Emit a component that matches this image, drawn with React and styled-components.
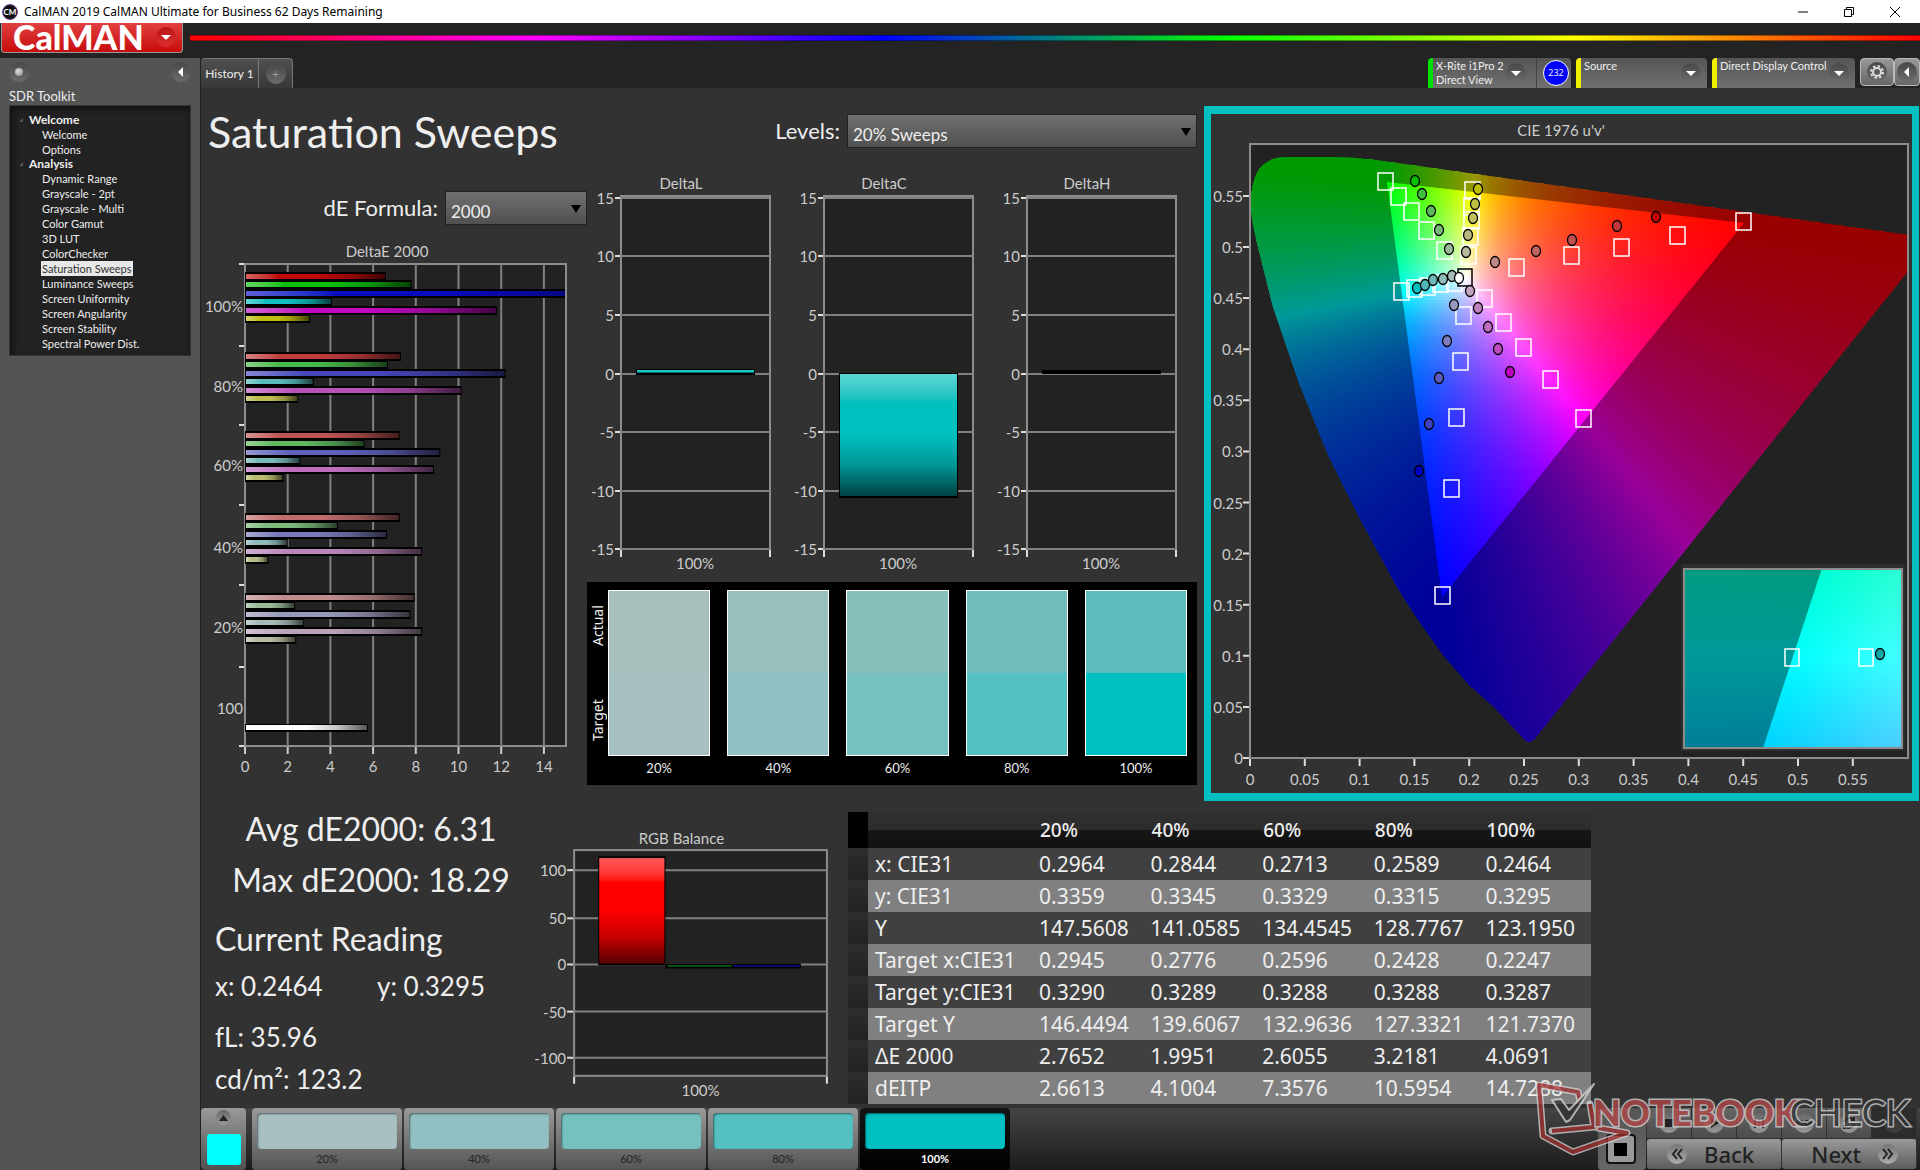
import React from "react";
import styled, { createGlobalStyle, css } from "styled-components";

/* ---------- data ---------- */

const tree = [
  { name: "Welcome", items: ["Welcome", "Options"] },
  {
    name: "Analysis",
    items: [
      "Dynamic Range",
      "Grayscale - 2pt",
      "Grayscale - Multi",
      "Color Gamut",
      "3D LUT",
      "ColorChecker",
      "Saturation Sweeps",
      "Luminance Sweeps",
      "Screen Uniformity",
      "Screen Angularity",
      "Screen Stability",
      "Spectral Power Dist.",
    ],
  },
];

const swatches = [
  { label: "20%", actual: "#a8c0bc", target: "#a7c0c2" },
  { label: "40%", actual: "#98c0bc", target: "#92bfc1" },
  { label: "60%", actual: "#86bfbb", target: "#77c0c0" },
  { label: "80%", actual: "#72bdbc", target: "#55c0c1" },
  { label: "100%", actual: "#5cbcbc", target: "#00c0c2" },
];

const tableRows = [
  ["x: CIE31", "0.2964", "0.2844", "0.2713", "0.2589", "0.2464"],
  ["y: CIE31", "0.3359", "0.3345", "0.3329", "0.3315", "0.3295"],
  ["Y", "147.5608", "141.0585", "134.4545", "128.7767", "123.1950"],
  ["Target x:CIE31", "0.2945", "0.2776", "0.2596", "0.2428", "0.2247"],
  ["Target y:CIE31", "0.3290", "0.3289", "0.3288", "0.3288", "0.3287"],
  ["Target Y", "146.4494", "139.6067", "132.9636", "127.3321", "121.7370"],
  ["ΔE 2000", "2.7652", "1.9951", "2.6055", "3.2181", "4.0691"],
  ["dEITP", "2.6613", "4.1004", "7.3576", "10.5954", "14.7288"],
];

// bar lengths are in dE units
const deGroups = [
  { label: "100%", y: 272, colors: ["#c00a0a", "#0cc00c", "#0a0ac0", "#10c0c0", "#c00ac0", "#c0c00c"], values: [6.6, 7.8, 18.3, 4.07, 11.8, 3.05] },
  { label: "80%", y: 352, colors: ["#c03c3c", "#48ba48", "#4646ba", "#58bcbc", "#ba50ba", "#bcbc50"], values: [7.3, 6.7, 12.2, 3.22, 10.15, 2.5] },
  { label: "60%", y: 431, colors: ["#c05454", "#60ba60", "#6060ba", "#78baba", "#bc6ebc", "#bcbc70"], values: [7.25, 5.6, 9.15, 2.6, 8.85, 1.8] },
  { label: "40%", y: 513, colors: ["#c06c6c", "#7cba7c", "#7a7aba", "#90baba", "#ba86ba", "#bcbc88"], values: [7.25, 4.35, 6.65, 2.0, 8.3, 1.1] },
  { label: "20%", y: 593, colors: ["#c08c8c", "#9aba9a", "#9898ba", "#a6baba", "#baa2ba", "#babaa2"], values: [7.95, 2.35, 7.75, 2.77, 8.3, 2.4] },
];

const targets = [
  [1385, 181], [1398, 196], [1411, 211], [1426, 230], [1444, 250],
  [1472, 190], [1471, 206], [1471, 220], [1470, 236], [1468, 255],
  [1401, 291], [1414, 288], [1427, 286], [1440, 283], [1454, 282],
  [1484, 298], [1503, 322], [1523, 347], [1550, 379], [1583, 418],
  [1463, 315], [1460, 361], [1456, 417], [1451, 488], [1442, 595],
  [1516, 267], [1571, 255], [1621, 247], [1677, 235], [1743, 221],
];

const readings = [
  [1415, 181, "#00c000"], [1422, 194, "#3cc03c"], [1431, 211, "#5cb85c"], [1439, 230, "#78b878"], [1449, 249, "#98b898"],
  [1478, 189, "#c0c000"], [1475, 204, "#c0c040"], [1473, 218, "#c0c060"], [1468, 235, "#b8b880"], [1466, 252, "#b8b8a0"],
  [1417, 288, "#00c0c0"], [1425, 285, "#50b8b8"], [1433, 280, "#70b8b8"], [1443, 279, "#90b8b8"], [1452, 276, "#a8bcbc"],
  [1470, 291, "#c0a4c0"], [1478, 308, "#c084c0"], [1488, 327, "#c06cc0"], [1498, 349, "#c04cc0"], [1510, 372, "#c000c0"],
  [1454, 305, "#9898c0"], [1447, 341, "#7c7cc0"], [1439, 378, "#5c5cc0"], [1429, 424, "#4040c0"], [1419, 471, "#0000c0"],
  [1495, 262, "#c08888"], [1536, 251, "#c06464"], [1572, 240, "#c05050"], [1617, 226, "#c03838"], [1656, 217, "#c00000"],
  [1459, 278, "#ffffff"],
];

/* ---------- colour maths for the chromaticity fills ---------- */

function xyToRgb(x, y) {
  const X = x / y;
  const Z = (1 - x - y) / y;
  let rgb = [
    3.2406 * X - 1.5372 - 0.4986 * Z,
    -0.9689 * X + 1.8758 + 0.0415 * Z,
    0.0557 * X - 0.204 + 1.057 * Z,
  ].map((c) => Math.max(0, c));
  const max = Math.max(...rgb);
  rgb = rgb.map((c) => Math.round((c / max) * 255));
  return `rgb(${rgb.join(",")})`;
}

function uvToRgb(u, v) {
  const d = 6 * u - 16 * v + 12;
  return xyToRgb((9 * u) / d, (4 * v) / d);
}

function ColorField({ id, x, y, width, height, step, rowHeight, colorAt }) {
  const rows = [];
  for (let top = y; top < y + height; top += rowHeight) rows.push(top);
  const stops = [];
  for (let left = 0; left <= width; left += step) stops.push(left);
  return (
    <g>
      <defs>
        {rows.map((top) => (
          <linearGradient key={top} id={`${id}${top}`}>
            {stops.map((s) => (
              <stop key={s} offset={s / width} stopColor={colorAt(x + s, top + rowHeight / 2)} />
            ))}
          </linearGradient>
        ))}
      </defs>
      {rows.map((top) => (
        <rect key={top} x={x} y={top} width={width} height={rowHeight + 1} fill={`url(#${id}${top})`} />
      ))}
    </g>
  );
}

/* ---------- charts ---------- */

function BarGradient({ id, color, horizontal }) {
  const dir = horizontal ? { x2: 1, y2: 0 } : { x2: 0, y2: 1 };
  return (
    <defs>
      <linearGradient id={id} x1="0" y1="0" {...dir}>
        <stop offset="0" stopColor={`color-mix(in srgb, ${color} 65%, white)`} />
        <stop offset=".23" stopColor={color} />
        <stop offset=".5" stopColor={color} />
        <stop offset=".75" stopColor={`color-mix(in srgb, ${color} 78%, black)`} />
        <stop offset="1" stopColor={`color-mix(in srgb, ${color} 35%, black)`} />
      </linearGradient>
    </defs>
  );
}

function DeltaEChart() {
  const x0 = 245;
  const unit = 42.7 / 2;
  return (
    <ChartSvg viewBox="201 240 386 540" role="img" aria-label="DeltaE 2000">
      <clipPath id="dePlot"><rect x={x0} y="264" width="320" height="482" /></clipPath>
      <ChartText x="387" y="257" textAnchor="middle">DeltaE 2000</ChartText>
      <rect x={x0} y="264" width="321" height="482" fill="#222" stroke="#8c8c8c" strokeWidth="2" />
      {[2, 4, 6, 8, 10, 12, 14].map((n) => (
        <path key={n} d={`M${x0 + n * unit} 264V746`} stroke="#808080" strokeWidth="2" />
      ))}
      {[0, 2, 4, 6, 8, 10, 12, 14].map((n) => (
        <g key={n}>
          <path d={`M${x0 + n * unit} 747v7`} stroke="#ccc" strokeWidth="2" />
          <ChartText x={x0 + n * unit} y="772" textAnchor="middle">{n}</ChartText>
        </g>
      ))}
      {[264, 346, 425, 505, 585, 667, 746].map((y) => (
        <path key={y} d={`M239 ${y}h5`} stroke="#ddd" strokeWidth="2" />
      ))}
      {deGroups.map((g) => (
        <g key={g.label}>
          <ChartText x="243" y={g.y + 40} textAnchor="end">{g.label}</ChartText>
          <g clipPath="url(#dePlot)">
            {g.values.map((v, i) => {
              const top = g.y + Math.round(i * 8.4);
              const w = v * unit;
              const id = `de${g.y}${i}`;
              return (
                <g key={i}>
                  <BarGradient id={id} color={g.colors[i]} horizontal />
                  <rect x={x0} y={top} width={w} height="9" fill="#000" />
                  <rect x={x0 + 1} y={top + 2} width={w - 2} height="5" fill={`url(#${id})`} />
                </g>
              );
            })}
          </g>
        </g>
      ))}
      <ChartText x="243" y="714" textAnchor="end">100</ChartText>
      <BarGradient id="deWhite" color="#ffffff" horizontal />
      <rect x={x0} y="724" width="123" height="8" fill="#000" />
      <rect x={x0 + 1} y="725" width="121" height="5" fill="url(#deWhite)" />
    </ChartSvg>
  );
}

function DeltaChart({ name, bar }) {
  const lines = [[15, 198], [10, 256], [5, 315], [0, 374], [-5, 432], [-10, 491], [-15, 549]];
  return (
    <ChartSvg viewBox="590 170 203 405" role="img" aria-label={name}>
      <ChartText x="681" y="189" textAnchor="middle">{name}</ChartText>
      <rect x="621" y="196" width="149" height="353" fill="#222" stroke="#8c8c8c" strokeWidth="2" />
      {lines.map(([n, y]) => (
        <g key={n}>
          <path d={`M621 ${y}h149`} stroke="#808080" strokeWidth="2" />
          <path d={`M615 ${y}h5`} stroke="#ddd" strokeWidth="2" />
          <ChartText x="614" y={y + 6} textAnchor="end">{n}</ChartText>
        </g>
      ))}
      <path d="M621 550v7M770 550v7" stroke="#ddd" strokeWidth="2" />
      <ChartText x="695" y="569" textAnchor="middle">100%</ChartText>
      {bar && <BarGradient id={`fill${name}`} color="#00c0c0" />}
      <rect x="636" y={bar ? bar[0] : 370} width="119" height={bar ? bar[1] : 4} fill="#000" />
      {bar && <rect x="637" y={bar[0] + 1} width="117" height={bar[1] - 3} fill={`url(#fill${name})`} />}
    </ChartSvg>
  );
}

function RgbChart() {
  return (
    <ChartSvg viewBox="535 820 312 285" role="img" aria-label="RGB Balance">
      <ChartText x="681" y="844" textAnchor="middle">RGB Balance</ChartText>
      <rect x="574" y="850" width="252" height="225" fill="#222" stroke="#8c8c8c" strokeWidth="2" />
      {[[100, 870], [50, 918], [0, 964], [-50, 1011], [-100, 1057]].map(([n, y]) => (
        <g key={n}>
          <path d={`M574 ${y}h252`} stroke="#808080" strokeWidth="2" />
          <path d={`M567 ${y}h6`} stroke="#ddd" strokeWidth="2" />
          <ChartText x="566" y={y + 6} textAnchor="end">{n}</ChartText>
        </g>
      ))}
      <path d="M574 1076v7M826 1076v7" stroke="#ddd" strokeWidth="2" />
      <ChartText x="700" y="1095" textAnchor="middle">100%</ChartText>
      <BarGradient id="rgbRed" color="#ff0000" />
      <rect x="598" y="856" width="67" height="109" fill="#000" />
      <rect x="599" y="858" width="65" height="105" fill="url(#rgbRed)" />
      <rect x="665" y="963" width="135" height="5" fill="#000" />
      <rect x="667" y="965" width="64" height="1" fill="#18a018" />
      <rect x="733" y="965" width="66" height="1" fill="#1818e0" />
    </ChartSvg>
  );
}

const locusPath =
  "M1251 197C1253 178 1258 166 1269 161C1276 157 1282 157 1292 157H1330C1355 157 1376 160 1397 163L1908 235V271L1537 736Q1529 747 1522 737L1494 707L1469 685L1443 655L1416 617L1397 587L1359 517L1328 455L1299 383L1273 307L1257 243C1253 225 1250 210 1251 197Z";

function CieChart() {
  const sx = (u) => 1250 + u * 1096;
  const sy = (v) => 758 - v * 1022;
  const ticks = [0, 0.05, 0.1, 0.15, 0.2, 0.25, 0.3, 0.35, 0.4, 0.45, 0.5, 0.55];
  return (
    <ChartSvg viewBox="1211 114 701 679" role="img" aria-label="CIE 1976 u'v'">
      <defs>
        <clipPath id="locus"><path d={locusPath} /></clipPath>
        <clipPath id="inset"><rect x="1684" y="569" width="217" height="178" /></clipPath>
      </defs>
      <ChartText x="1561" y="136" textAnchor="middle">CIE 1976 u'v'</ChartText>
      <rect x="1250" y="144" width="658" height="614" fill="#222" />
      <g clipPath="url(#locus)">
        <ColorField
          id="uv" x={1250} y={156} width={658} height={590} step={7} rowHeight={3}
          colorAt={(x, y) => uvToRgb((x - 1250) / 1096, (758 - y) / 1022)}
        />
        <path
          d="M1240 140H1920V760H1240ZM1387 182L1744 223L1442 597Z"
          fill="#000" fillOpacity=".4" fillRule="evenodd"
        />
      </g>
      <rect x="1250" y="144" width="658" height="614" fill="none" stroke="#8c8c8c" strokeWidth="2" />
      {ticks.map((t) => (
        <g key={t}>
          <path d={`M${sx(t)} 759v7M1243 ${sy(t)}h6`} stroke="#ddd" strokeWidth="2" />
          <ChartText x={sx(t)} y="785" textAnchor="middle">{t}</ChartText>
          <ChartText x="1243" y={sy(t) + 6} textAnchor="end">{t}</ChartText>
        </g>
      ))}
      {targets.map(([x, y]) => (
        <rect key={`${x}-${y}`} x={x - 7} y={y - 8} width="15" height="17" fill="none" stroke="#fff" strokeWidth="1.5" />
      ))}
      <rect x="1458" y="269" width="14" height="17" fill="none" stroke="#000" strokeWidth="1.5" />
      {readings.map(([x, y, c]) => (
        <ellipse key={`${x}-${y}`} cx={x} cy={y} rx="4.5" ry="5.5" fill={c} stroke="#000" strokeWidth="1.3" />
      ))}
      <rect x="1681" y="564" width="224" height="187" fill="#2e2e2e" />
      <g clipPath="url(#inset)">
        <ColorField
          id="xy" x={1683} y={568} width={220} height={181} step={11} rowHeight={3}
          colorAt={(x, y) => xyToRgb(0.2247 + (x - 1792) / 4090, 0.3287 - (y - 657) / 3470)}
        />
        <path d="M1683 568H1822L1763 748H1683Z" fill="#000" fillOpacity=".4" />
      </g>
      <rect x="1684" y="569" width="218" height="179" fill="none" stroke="#8c8c8c" strokeWidth="2" />
      <rect x="1785" y="649" width="14" height="17" fill="none" stroke="#fff" strokeWidth="1.5" />
      <rect x="1859" y="649" width="14" height="17" fill="none" stroke="#fff" strokeWidth="1.5" />
      <ellipse cx="1880" cy="654" rx="4.5" ry="5.5" fill="#10a8a8" stroke="#000" strokeWidth="1.3" />
    </ChartSvg>
  );
}

/* ---------- small drawings ---------- */

const Down = () => (
  <svg width="20" height="20" viewBox="0 0 20 20" aria-hidden="true">
    <path d="M5 8h10l-5 5z" fill="#fff" />
  </svg>
);

const Left = () => (
  <svg width="20" height="20" viewBox="0 0 20 20" aria-hidden="true">
    <path d="M12 5v10l-5-5z" fill="#fff" />
  </svg>
);

const Gear = () => (
  <svg width="18" height="18" viewBox="0 0 18 18" aria-hidden="true">
    <circle cx="9" cy="9" r="4" fill="none" stroke="#ddd" strokeWidth="2" />
    <circle cx="9" cy="9" r="6" fill="none" stroke="#ddd" strokeWidth="2" strokeDasharray="2.4 2.3" />
  </svg>
);

const controls = [
  { name: "Stop", d: "M6 6h8v8h-8z" },
  { name: "Play", d: "M7 5l8 5l-8 5z" },
  { name: "Step", d: "M5 5h2v10h-2zM13 5h2v10h-2zM9 8h2v2h-2zM9 12h2v2h-2z" },
  { name: "Continuous", d: "M10 10c-2-3-6-3-6 0s4 3 6 0s6-3 6 0s-4 3-6 0z", line: true },
  { name: "Repeat", d: "M15 7a6 6 0 0 0-10 2M5 13a6 6 0 0 0 10-2M15 4v3h-3M5 16v-3h3", line: true },
  { name: "Off", d: "", off: true },
];

function NotebookMark() {
  const shield = "M48 19L46 10L7 3L11 54L41 70L95 51L66 46M20 49L62 45L58 22";
  return (
    <Mark viewBox="0 0 388 80" role="img" aria-label="NOTEBOOKCHECK">
      <g opacity=".75">
        <path d={shield} fill="none" stroke="#d8d8d8" strokeWidth="7" strokeLinejoin="round" strokeLinecap="round" />
        <path d={shield} fill="none" stroke="#a33030" strokeWidth="4" strokeLinejoin="round" />
        <path d="M20 18L29 17L37 28L62 2L38 38L34 40Z" fill="#333" stroke="#d8d8d8" strokeWidth="2" strokeLinejoin="round" />
        <MarkText x="61" y="44" $weight={900} fill="#b84848">NOTEBOOK</MarkText>
        <MarkText x="258" y="44" $weight={400} fill="#333">CHECK</MarkText>
      </g>
    </Mark>
  );
}

/* ---------- page ---------- */

export default function App() {
  return (
    <Page>
      <GlobalStyle />
      <TitleBar>
        <AppIcon>CM</AppIcon>
        <AppTitle>CalMAN 2019 CalMAN Ultimate for Business 62 Days Remaining</AppTitle>
        <WindowButton aria-label="Minimize">
          <svg width="12" height="12"><path d="M1 6h10" stroke="#000" /></svg>
        </WindowButton>
        <WindowButton aria-label="Restore">
          <svg width="12" height="12" fill="none" stroke="#000"><path d="M1.5 3.5h7v7h-7zM3.5 3.5v-2h7v7h-2" /></svg>
        </WindowButton>
        <WindowButton aria-label="Close">
          <svg width="12" height="12"><path d="M1 1l10 10M11 1L1 11" stroke="#000" /></svg>
        </WindowButton>
      </TitleBar>

      <Brand>
        <LogoButton>CalMAN<Round $red><Down /></Round></LogoButton>
        <Rainbow />
      </Brand>

      <Body>
        <Sidebar>
          <SideTop>
            <Round as="button" aria-label="Pin"><Dot /></Round>
            <Round as="button" aria-label="Collapse"><Left /></Round>
          </SideTop>
          <SideTitle>SDR Toolkit</SideTitle>
          <Tree>
            {tree.map((g) => (
              <React.Fragment key={g.name}>
                <TreeGroup>{g.name}</TreeGroup>
                {g.items.map((i) => (
                  <TreeItem key={i}>
                    <TreeLink href="#" $active={i === "Saturation Sweeps"}>{i}</TreeLink>
                  </TreeItem>
                ))}
              </React.Fragment>
            ))}
          </Tree>
        </Sidebar>

        <Main>
          <TabStrip>
            <Tab>History 1</Tab>
            <Tab $add aria-label="Add history"><Round>+</Round></Tab>
            <Spacer />
            <Device $width={143} $color="#00e000">
              <DeviceName>X-Rite i1Pro 2<br />Direct View</DeviceName>
              <Round><Down /></Round>
              <CountBox><Count>232</Count></CountBox>
            </Device>
            <Device $width={131} $color="#f0f000">
              <DeviceName>Source</DeviceName>
              <Round><Down /></Round>
            </Device>
            <Device $width={143} $color="#f0f000">
              <DeviceName>Direct Display Control</DeviceName>
              <Round><Down /></Round>
            </Device>
            <ToolButton $width={34} aria-label="Settings"><Round><Gear /></Round></ToolButton>
            <ToolButton $width={26} aria-label="Collapse"><Round><Left /></Round></ToolButton>
          </TabStrip>

          <Upper>
            <LeftColumn>
              <Heading>Saturation Sweeps</Heading>
              <Field>
                <FieldLabel htmlFor="formula">dE Formula:</FieldLabel>
                <SelectBox $width={142}>
                  <Select id="formula"><option>2000</option></Select>
                </SelectBox>
              </Field>
              <DeltaEChart />
            </LeftColumn>

            <MiddleColumn>
              <Field $wide>
                <FieldLabel htmlFor="levels">Levels:</FieldLabel>
                <SelectBox $width={350}>
                  <Select id="levels"><option>20% Sweeps</option></Select>
                </SelectBox>
              </Field>
              <Deltas>
                <DeltaChart name="DeltaL" bar={[369, 6]} />
                <DeltaChart name="DeltaC" bar={[373, 125]} />
                <DeltaChart name="DeltaH" />
              </Deltas>
              <SwatchPanel>
                <SideLabels><span>Target</span><span>Actual</span></SideLabels>
                {swatches.map((s) => (
                  <Swatch key={s.label}>
                    <SwatchColor $top={s.actual} $bottom={s.target} />
                    {s.label}
                  </Swatch>
                ))}
              </SwatchPanel>
            </MiddleColumn>

            <CiePanel><CieChart /></CiePanel>
          </Upper>

          <Lower>
            <Readings>
              <Summary>Avg dE2000: 6.31</Summary>
              <Summary>Max dE2000: 18.29</Summary>
              <ReadingTitle>Current Reading</ReadingTitle>
              <Pair><span>x: 0.2464</span><span>y: 0.3295</span></Pair>
              <Value>fL: 35.96</Value>
              <Value $tight>cd/m²: 123.2</Value>
            </Readings>
            <RgbBox><RgbChart /></RgbBox>
            <Table>
              <colgroup>
                <col width="20" /><col width="165" />
                <col /><col /><col /><col /><col />
              </colgroup>
              <thead>
                <tr>
                  <Corner />
                  <Head as="td" />
                  {swatches.map((s) => <Head key={s.label} scope="col">{s.label}</Head>)}
                </tr>
              </thead>
              <tbody>
                {tableRows.map(([name, ...values]) => (
                  <Row key={name}>
                    <Grip />
                    <RowName scope="row">{name}</RowName>
                    {values.map((v, i) => <Cell key={i}>{v}</Cell>)}
                  </Row>
                ))}
              </tbody>
            </Table>
          </Lower>

          <BottomBar>
            <Current aria-label="Current pattern">
              <MiniRound>
                <svg width="9" height="6" aria-hidden="true"><path d="M0 6h9L4.5 0z" fill="#222" /></svg>
              </MiniRound>
              <CurrentColor />
            </Current>
            {swatches.map((s, i) => (
              <Pattern key={s.label} $active={i === 4}>
                <PatternColor $color={s.target} />
                {s.label}
              </Pattern>
            ))}
            <Spacer />
            <StopBox aria-label="Stop"><StopIcon /></StopBox>
            <Controls>
              {controls.map((c) => (
                <Control key={c.name} $off={c.off} aria-label={c.name}>
                  <MiniRound $big>
                    <svg width="20" height="20" aria-hidden="true">
                      <path d={c.d} fill={c.line ? "none" : "#222"} stroke={c.line ? "#222" : "none"} strokeWidth="2" />
                    </svg>
                  </MiniRound>
                </Control>
              ))}
              <Nav $back><NavRound><path d="M10 5l-4 5l4 5M15 5l-4 5l4 5" /></NavRound>Back</Nav>
              <Nav>Next<NavRound><path d="M5 5l4 5l-4 5M10 5l4 5l-4 5" /></NavRound></Nav>
            </Controls>
          </BottomBar>
        </Main>
      </Body>
      <NotebookMark />
    </Page>
  );
}

/* ---------- styles ---------- */

const GlobalStyle = createGlobalStyle`
  * { box-sizing: border-box; }
  body {
    margin: 0;
    background: #323232;
    color: #eee;
    font-family: Lato, sans-serif;
    font-size: 12px;
  }
  button { border: 0; padding: 0; background: none; color: inherit; font: inherit; }
`;

const Page = styled.div`
  display: flex;
  flex-direction: column;
  min-height: 100vh;
  position: relative;
  overflow: hidden;
`;

const TitleBar = styled.header`
  display: flex;
  align-items: center;
  height: 23px;
  padding-left: 2px;
  background: #fff;
  color: #000;
`;

const AppIcon = styled.span`
  width: 16px;
  height: 16px;
  border-radius: 50%;
  background: #111;
  border: 1px solid #7a4aa0;
  color: #fff;
  font-size: 8px;
  font-weight: 700;
  line-height: 14px;
  text-align: center;
`;

const AppTitle = styled.span`
  flex: 1;
  margin-left: 6px;
  font-family: "Noto Sans", sans-serif;
  font-size: 12px;
`;

const WindowButton = styled.button`
  width: 46px;
  height: 23px;
  display: flex;
  align-items: center;
  justify-content: center;
  &:last-child {
    margin-right: 2px;
  }
`;

const Brand = styled.div`
  display: flex;
  height: 35px;
  background: #232323;
`;

const LogoButton = styled.button`
  display: flex;
  align-items: center;
  justify-content: space-between;
  width: 182px;
  height: 30px;
  margin-left: 1px;
  padding: 0 6px 2px 11px;
  border: 1px solid #999;
  border-top: 0;
  border-radius: 0 0 4px 4px;
  background: linear-gradient(#e04040, #c80c0c);
  color: #fff;
  font-family: Lato, sans-serif;
  font-size: 34px;
  font-weight: 900;
  line-height: 26px;
`;

const Rainbow = styled.div`
  flex: 1;
  height: 6px;
  margin: 12px 0 0 7px;
  border: solid rgba(0, 0, 0, 0.4);
  border-width: 1px 0;
  background: linear-gradient(90deg, #f00, #f0f 20%, #00f 40%, #0f0 60%, #ff0 80%, #f00);
`;

const Round = styled.span`
  display: flex;
  align-items: center;
  justify-content: center;
  flex: none;
  width: 20px;
  height: 20px;
  border-radius: 50%;
  background: ${(p) => (p.$red ? "linear-gradient(#b81414, #e03030)" : "linear-gradient(#484848, #6c6c6c)")};
  color: #999;
`;

const Dot = styled.span`
  width: 8px;
  height: 8px;
  border-radius: 50%;
  background: radial-gradient(circle at 3px 3px, #ddd, #888);
`;

const Body = styled.div`
  display: flex;
  flex: 1;
  background: #232323;
`;

const Sidebar = styled.nav`
  width: 200px;
  flex: none;
  padding: 4px 9px 0;
  background: #545454;
`;

const SideTop = styled.div`
  display: flex;
  justify-content: space-between;
`;

const SideTitle = styled.div`
  margin-top: 5px;
  font-size: 13px;
  line-height: 18px;
`;

const Tree = styled.ul`
  margin: 0;
  padding: 7px 0 4px;
  list-style: none;
  border: 1px solid #333;
  background: #222;
  box-shadow: inset 2px 3px 6px #111;
  line-height: 15px;
`;

const TreeGroup = styled.li`
  display: flex;
  align-items: center;
  padding-left: 9px;
  font-weight: 700;
  line-height: 14px;
  &::before {
    content: "";
    margin-right: 6px;
    border-left: 4px solid transparent;
    border-bottom: 4px solid #555;
  }
`;

const TreeItem = styled.li`
  height: 15px;
  padding-left: 31px;
`;

const TreeLink = styled.a`
  display: inline-block;
  padding: 0 1px;
  color: #eee;
  font-size: 11px;
  text-decoration: none;
  white-space: nowrap;
  ${(p) => p.$active && css`
    background: #e8e8e8;
    color: #333;
  `}
`;

const Main = styled.main`
  display: flex;
  flex-direction: column;
  flex: 1;
  min-width: 0;
  border-left: 1px solid #222;
  background: #323232;
`;

const TabStrip = styled.div`
  display: flex;
  height: 30px;
  background: #232323;
`;

const Spacer = styled.div`
  flex: 1;
`;

const Tab = styled.button`
  display: flex;
  align-items: center;
  justify-content: center;
  width: ${(p) => (p.$add ? 34 : 58)}px;
  border: 1px solid #777;
  border-width: 1px 1px 0 0;
  border-radius: ${(p) => (p.$add ? "0 4px 0 0" : "4px 0 0 0")};
  background: linear-gradient(#505050, #383838);
`;

const Device = styled.div`
  display: flex;
  align-items: center;
  width: ${(p) => p.$width}px;
  margin-right: 5px;
  padding: 0 6px 0 3px;
  border-left: 5px solid ${(p) => p.$color};
  border-radius: 4px 4px 0 0;
  background: linear-gradient(#555, #707070);
`;

const DeviceName = styled.span`
  flex: 1;
  align-self: flex-start;
  padding-top: 1px;
  font-size: 11px;
  line-height: 14px;
  white-space: nowrap;
`;

const CountBox = styled.span`
  display: flex;
  align-items: center;
  align-self: stretch;
  margin: 0 -4px 0 10px;
  padding-left: 6px;
  border-left: 1px solid #444;
`;

const Count = styled.span`
  width: 26px;
  height: 26px;
  border: 1px solid #fff;
  border-radius: 50%;
  background: #00f;
  font-family: "Noto Sans", sans-serif;
  font-size: 9px;
  line-height: 24px;
  text-align: center;
`;

const ToolButton = styled.button`
  display: flex;
  align-items: center;
  justify-content: center;
  width: ${(p) => p.$width}px;
  height: 28px;
  border: 1px solid #bbb;
  border-radius: 4px;
  background: linear-gradient(#999, #666);
`;

const Upper = styled.section`
  display: grid;
  grid-template-columns: minmax(0, 386fr) minmax(0, 612fr) minmax(0, 721fr);
  align-items: start;
`;

const LeftColumn = styled.div`
  padding-top: 14px;
`;

const Heading = styled.h1`
  margin: 0 0 29px 7px;
  font-size: 43px;
  font-weight: 400;
  line-height: 60px;
  white-space: nowrap;
`;

const Field = styled.div`
  display: flex;
  align-items: center;
  justify-content: flex-end;
  gap: 7px;
  margin: ${(p) => (p.$wide ? "0 2px 22px 0" : "0 0 15px")};
`;

const FieldLabel = styled.label`
  font-size: 22px;
  line-height: 34px;
`;

const SelectBox = styled.div`
  position: relative;
  width: ${(p) => p.$width}px;
  &::after {
    content: "";
    position: absolute;
    top: 14px;
    right: 6px;
    border: solid transparent;
    border-width: 8px 5px 0;
    border-top-color: #000;
    pointer-events: none;
  }
`;

const Select = styled.select`
  appearance: none;
  display: block;
  width: 100%;
  height: 34px;
  padding: 6px 5px 0;
  border: 1px solid #222;
  border-radius: 0;
  background: linear-gradient(#707070, #505050);
  color: #eee;
  font-family: Lato, sans-serif;
  font-size: 17px;
`;

const ChartSvg = styled.svg`
  display: block;
  width: 100%;
  height: auto;
`;

const ChartText = styled.text`
  fill: #ccc;
  font-family: Lato, sans-serif;
  font-size: 15px;
`;

const MiddleColumn = styled.div`
  padding-top: 26px;
`;

const Deltas = styled.div`
  display: grid;
  grid-template-columns: repeat(3, 1fr);
  padding-left: 3px;
`;

const SwatchPanel = styled.div`
  display: flex;
  gap: 17px;
  margin: 7px 2px 0 0;
  padding: 8px 10px 6px 0;
  background: #000;
`;

const SideLabels = styled.div`
  display: flex;
  justify-content: space-between;
  width: 21px;
  height: 166px;
  margin-right: -17px;
  padding: 15px 0;
  writing-mode: vertical-rl;
  transform: rotate(180deg);
  font-family: "Noto Sans", sans-serif;
  font-size: 14px;
  line-height: 21px;
`;

const Swatch = styled.div`
  flex: 1;
  font-size: 13px;
  line-height: 25px;
  margin-bottom: -2px;
  text-align: center;
`;

const SwatchColor = styled.div`
  height: 166px;
  border: 1px solid #fff;
  background: linear-gradient(${(p) => p.$top} 50%, ${(p) => p.$bottom} 50%);
`;

const CiePanel = styled.div`
  margin: 18px 1px 0 5px;
  border: solid #00c0c2;
  border-width: 8px 7px;
`;

const Lower = styled.section`
  display: grid;
  grid-template-columns: minmax(0, 334fr) minmax(0, 313fr) minmax(0, 743fr) minmax(0, 329fr);
  align-items: start;
  flex: 1;
`;

const Readings = styled.div`
  padding: 2px 0 0 14px;
  font-size: 26px;
  line-height: 36px;
`;

const Summary = styled.div`
  margin-right: 8px;
  font-size: 32px;
  line-height: 51px;
  text-align: center;
  white-space: nowrap;
`;

const ReadingTitle = styled.h2`
  margin: 12px 0 7px;
  font-size: 32px;
  font-weight: 400;
  line-height: 44px;
`;

const Pair = styled.div`
  display: grid;
  grid-template-columns: 162px 1fr;
`;

const Value = styled.div`
  margin-top: ${(p) => (p.$tight ? 6 : 15)}px;
`;

const RgbBox = styled.div`
  padding-top: 19px;
`;

const Table = styled.table`
  width: 100%;
  margin-top: 11px;
  border-collapse: collapse;
  table-layout: fixed;
  font-family: "Noto Sans", sans-serif;
  font-size: 21px;
  line-height: 32px;
  white-space: nowrap;
`;

const Corner = styled.td`
  background: #000;
`;

const Head = styled.th`
  height: 36px;
  padding: 0 0 0 7px;
  background: linear-gradient(#303030, #2c2c2c 50%, #161616 50%, #121212);
  font-size: 19px;
  font-weight: 500;
  line-height: 36px;
  text-align: left;
`;

const Grip = styled.td`
  padding: 0;
  background: linear-gradient(#2e2e2e, #222);
`;

const RowName = styled.th`
  padding: 0 0 0 7px;
  font-weight: 400;
  text-align: left;
`;

const Cell = styled.td`
  padding: 0 0 0 6px;
`;

const Row = styled.tr`
  background: #404040;
  &:nth-child(even) {
    background: #808080;
  }
`;

const BottomBar = styled.footer`
  display: flex;
  height: 62px;
  background: linear-gradient(#444, #1c1c1c);
`;

const Current = styled.button`
  display: flex;
  flex-direction: column;
  align-items: center;
  justify-content: space-between;
  width: 45px;
  margin-right: 6px;
  padding: 2px 0 5px;
  border-radius: 4px;
  background: linear-gradient(#999, #505050);
`;

const MiniRound = styled.span`
  display: flex;
  align-items: center;
  justify-content: center;
  width: ${(p) => (p.$big ? 20 : 15)}px;
  height: ${(p) => (p.$big ? 20 : 15)}px;
  border-radius: 50%;
  background: linear-gradient(#666, #999);
`;

const CurrentColor = styled.span`
  width: 34px;
  height: 31px;
  border-radius: 3px;
  background: #0ff;
`;

const Pattern = styled.button`
  width: 150px;
  margin-right: 2px;
  padding: 4px 5px 0;
  border-radius: 4px;
  background: ${(p) => (p.$active ? "linear-gradient(#141414, #000)" : "linear-gradient(#999, #555)")};
  color: ${(p) => (p.$active ? "#fff" : "#222")};
  font-size: 11px;
  font-weight: ${(p) => (p.$active ? 700 : 400)};
  line-height: 20px;
`;

const PatternColor = styled.span`
  display: block;
  height: 36px;
  border-radius: 4px;
  box-shadow: inset 1px 1px 2px rgba(0, 0, 0, 0.5);
  background: ${(p) => p.$color};
`;

const StopBox = styled.button`
  display: flex;
  align-items: flex-end;
  justify-content: center;
  width: 48px;
  margin-right: 1px;
  padding: 0 3px 6px 0;
  border-radius: 4px;
  background: linear-gradient(#555, #666);
`;

const StopIcon = styled.span`
  width: 30px;
  height: 30px;
  border: 2px solid #111;
  border-radius: 4px;
  background: linear-gradient(#000, #000) center / 13px 13px no-repeat #999;
`;

const Controls = styled.div`
  display: grid;
  grid-template-columns: repeat(6, 45px);
  grid-template-rows: 30px 30px;
  gap: 1px 0;
  margin-right: 3px;
`;

const Control = styled.button`
  display: flex;
  align-items: center;
  justify-content: center;
  border-right: 1px solid #333;
  background: ${(p) => (p.$off ? "#2c2c2c" : "linear-gradient(#666, #4c4c4c)")};
  ${MiniRound} {
    opacity: ${(p) => (p.$off ? 0.15 : 1)};
  }
`;

const Nav = styled.button`
  display: flex;
  align-items: center;
  justify-content: ${(p) => (p.$back ? "flex-start" : "flex-end")};
  gap: 17px;
  grid-column: span 3;
  padding: ${(p) => (p.$back ? "0 0 0 20px" : "0 18px 0 0")};
  border-right: 1px solid #333;
  border-radius: 3px;
  background: linear-gradient(#9a9a9a, #5c5c5c);
  color: #222;
  font-family: "Noto Sans", sans-serif;
  font-size: 22px;
  font-weight: 500;
  line-height: 28px;
`;

const NavRound = styled.svg.attrs({ viewBox: "0 0 20 20", "aria-hidden": true })`
  width: 20px;
  height: 20px;
  border-radius: 50%;
  background: linear-gradient(#777, #aaa);
  fill: none;
  stroke: #222;
  stroke-width: 2px;
`;

const Mark = styled.svg`
  position: absolute;
  right: 0;
  bottom: 8px;
  width: 388px;
  height: 80px;
  pointer-events: none;
`;

const MarkText = styled.text`
  font-family: Lato, sans-serif;
  font-size: 36px;
  font-weight: ${(p) => p.$weight};
  stroke: #d8d8d8;
  stroke-width: 3px;
  paint-order: stroke;
`;
